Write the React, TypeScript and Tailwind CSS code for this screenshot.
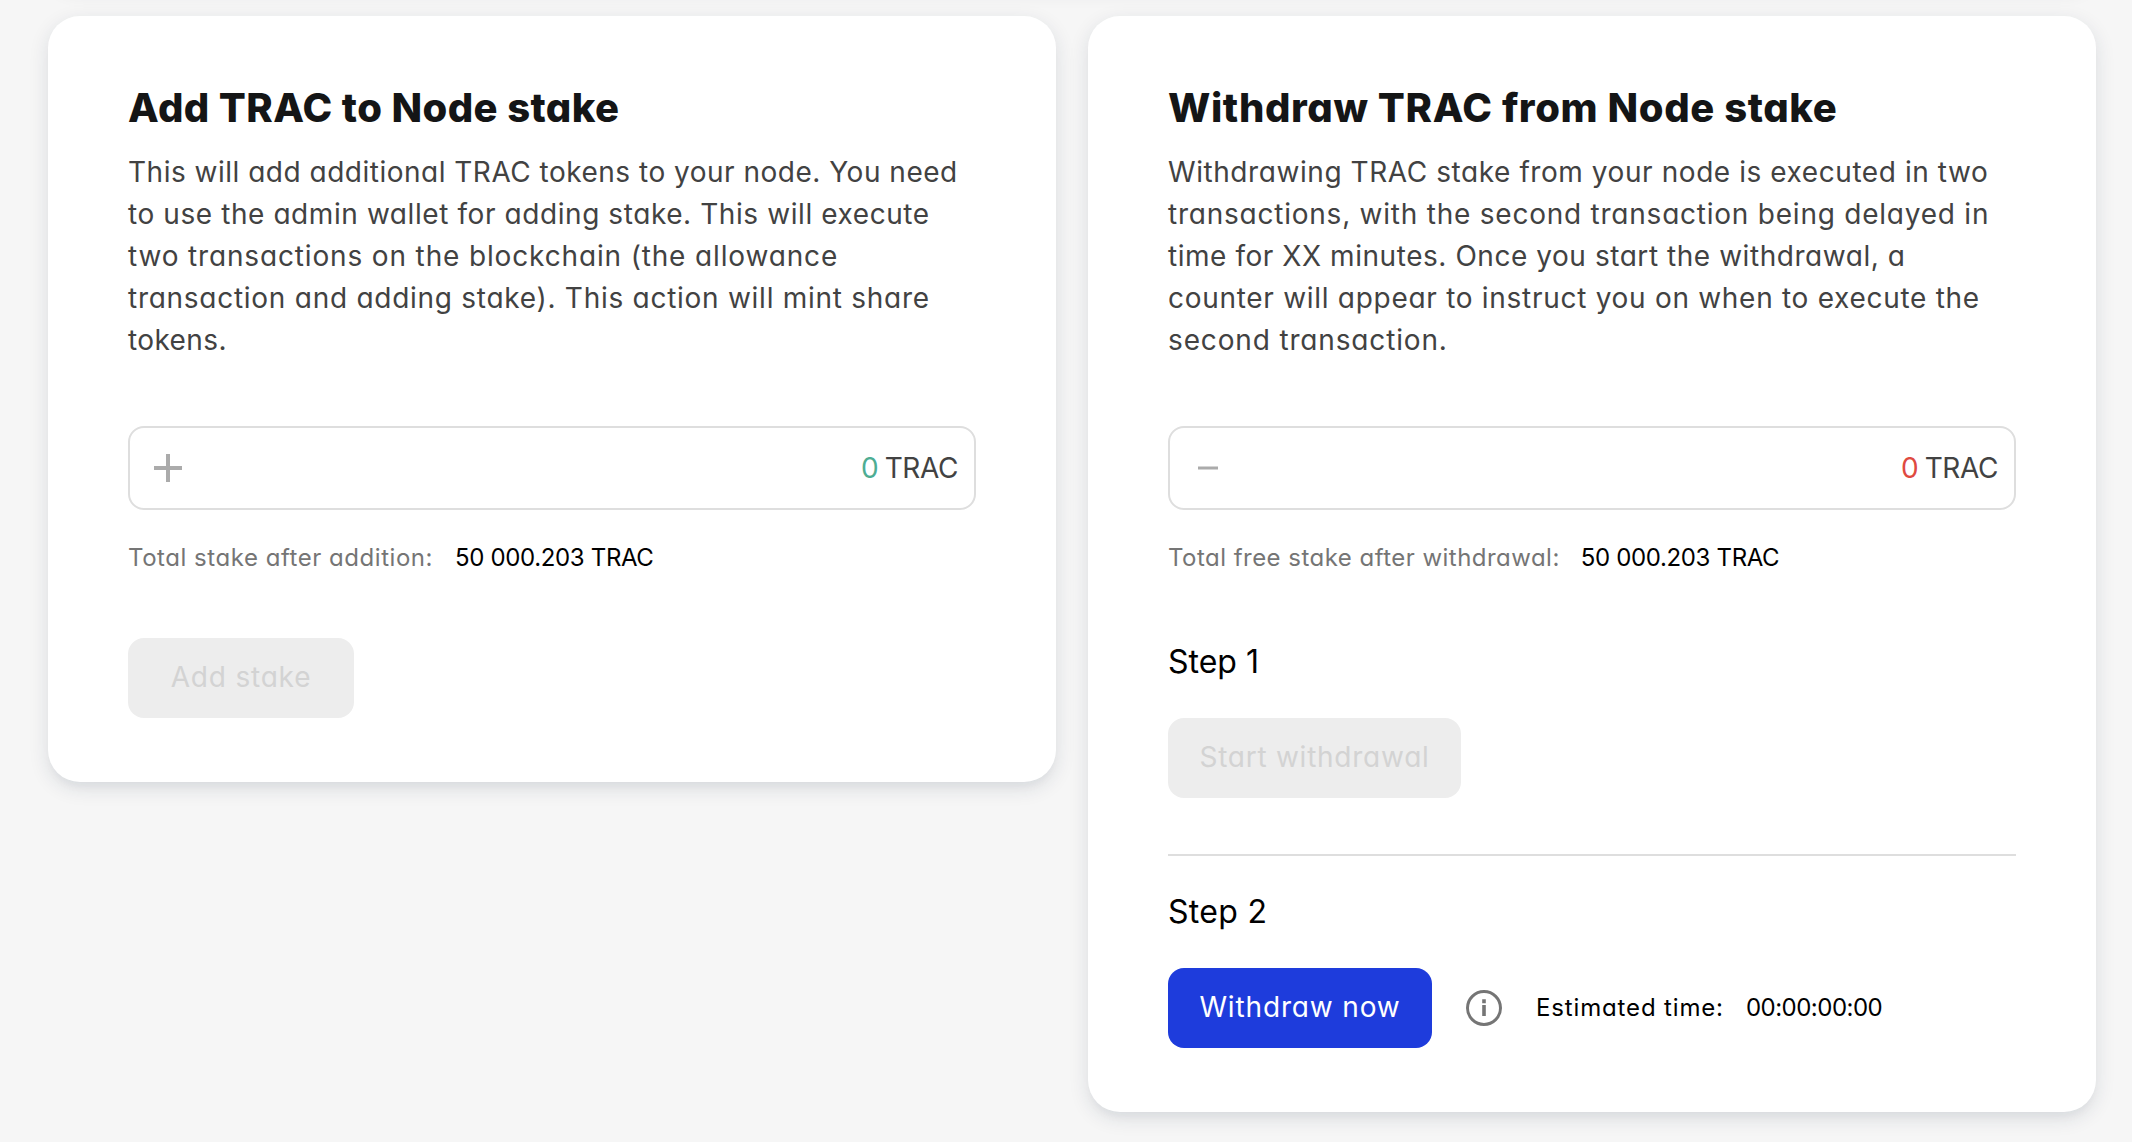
import type { ReactNode } from "react";

function Card({ children }: { children: ReactNode }) {
  return (
    <section className="w-[1008px] shrink-0 rounded-[32px] bg-white px-20 pt-[62px] pb-16 shadow-[0_6px_20px_rgba(24,39,65,0.12),0_8px_10px_-4px_rgba(24,39,65,0.04)]">
      {children}
    </section>
  );
}

function AmountField({ icon, amount }: { icon: ReactNode; amount: ReactNode }) {
  return (
    <div className="mt-[65px] flex h-[84px] items-center justify-between rounded-2xl border-2 border-[#dedede] pr-4 pl-6 text-[28px] text-[#424242]">
      {icon}
      <div className="flex gap-1.5">
        {amount}
        <span className="tracking-[-0.4px]">TRAC</span>
      </div>
    </div>
  );
}

function PlusIcon() {
  return (
    <svg className="size-7" viewBox="0 0 28 28" fill="none" stroke="#ababab" strokeWidth="4">
      <path d="M14 0V28M0 14H28" />
    </svg>
  );
}

function MinusIcon() {
  return (
    <svg className="ml-1 h-7 w-5" viewBox="0 0 20 28" fill="none" stroke="#ababab" strokeWidth="3">
      <path d="M0 14H20" />
    </svg>
  );
}

function InfoIcon() {
  return (
    <svg className="ml-[34px] size-9" viewBox="0 0 36 36" fill="none" stroke="#757575">
      <circle cx="18" cy="18" r="16.5" strokeWidth="3" />
      <path d="M18 9.2V13.2M18 15V26" strokeWidth="3.6" />
    </svg>
  );
}

export default function App() {
  return (
    <div className="flex h-[1142px] w-[2132px] flex-col gap-8 overflow-hidden bg-[#f6f6f6] px-12 font-['Inter',sans-serif] [font-feature-settings:'cv11']">
      <div className="-mt-20 h-16 w-[2048px] shrink-0 rounded-[32px] bg-white shadow-[0_6px_20px_rgba(24,39,65,0.12)]" />
      <main className="flex items-start gap-8">
        <Card>
          <h2 className="text-[40px] leading-[60px] font-extrabold tracking-[0.4px] whitespace-nowrap text-[#141516]">
            Add TRAC to Node stake
          </h2>
          <p className="mt-[13px] flex flex-col text-[28px] leading-[42px] whitespace-nowrap text-[#424242]">
            <span className="tracking-[0.5px]">This will add additional TRAC tokens to your node. You need</span>
            <span className="tracking-[0.58px]">to use the admin wallet for adding stake. This will execute</span>
            <span className="tracking-[0.85px]">two transactions on the blockchain (the allowance</span>
            <span className="tracking-[0.73px]">transaction and adding stake). This action will mint share</span>
            <span className="tracking-[0.4px]">tokens.</span>
          </p>
          <AmountField icon={<PlusIcon />} amount={<span className="text-[#4ead93]">0</span>} />
          <div className="mt-[30px] flex gap-[22px] text-2xl leading-9">
            <span className="tracking-[0.54px] text-[#757575]">Total stake after addition:</span>
            <span className="tracking-[-0.35px] text-black">50 000.203 TRAC</span>
          </div>
          <button className="mt-[62px] flex h-20 w-[226px] items-center justify-center rounded-2xl bg-[#ededed] pb-0.5 text-[28px] tracking-[0.8px] text-[#d3d3d3]">
            Add stake
          </button>
        </Card>

        <Card>
          <h2 className="text-[40px] leading-[60px] font-extrabold tracking-[0.6px] whitespace-nowrap text-[#141516]">
            Withdraw TRAC from Node stake
          </h2>
          <p className="mt-[13px] flex flex-col text-[28px] leading-[42px] whitespace-nowrap text-[#424242]">
            <span className="tracking-[0.57px]">Withdrawing TRAC stake from your node is executed in two</span>
            <span className="tracking-[0.77px]">transactions, with the second transaction being delayed in</span>
            <span className="tracking-[0.55px]">time for XX minutes. Once you start the withdrawal, a</span>
            <span className="tracking-[0.71px]">counter will appear to instruct you on when to execute the</span>
            <span className="tracking-[0.85px]">second transaction.</span>
          </p>
          <AmountField icon={<MinusIcon />} amount={<span className="text-[#df4a41]">0</span>} />
          <div className="mt-[30px] flex gap-[21px] text-2xl leading-9">
            <span className="tracking-[0.47px] text-[#757575]">Total free stake after withdrawal:</span>
            <span className="tracking-[-0.35px] text-black">50 000.203 TRAC</span>
          </div>
          <h3 className="mt-[62px] text-[32px] leading-[48px] text-black">Step 1</h3>
          <button className="mt-8 flex h-20 w-[293px] items-center justify-center rounded-2xl bg-[#ededed] pb-0.5 text-[28px] tracking-[0.75px] text-[#d3d3d3]">
            Start withdrawal
          </button>
          <hr className="mt-14 h-0.5 border-0 bg-[#dedede]" />
          <h3 className="mt-8 text-[32px] leading-[48px] tracking-[0.3px] text-black">Step 2</h3>
          <div className="mt-8 flex items-center text-2xl text-black">
            <button className="flex h-20 w-[264px] items-center justify-center rounded-2xl bg-[#1e3cdc] text-[28px] tracking-[0.85px] text-white">
              Withdraw now
            </button>
            <InfoIcon />
            <span className="ml-[34px] tracking-[0.85px]">Estimated time:</span>
            <span className="ml-[22px] tracking-[-0.5px]">00:00:00:00</span>
          </div>
        </Card>
      </main>
    </div>
  );
}
